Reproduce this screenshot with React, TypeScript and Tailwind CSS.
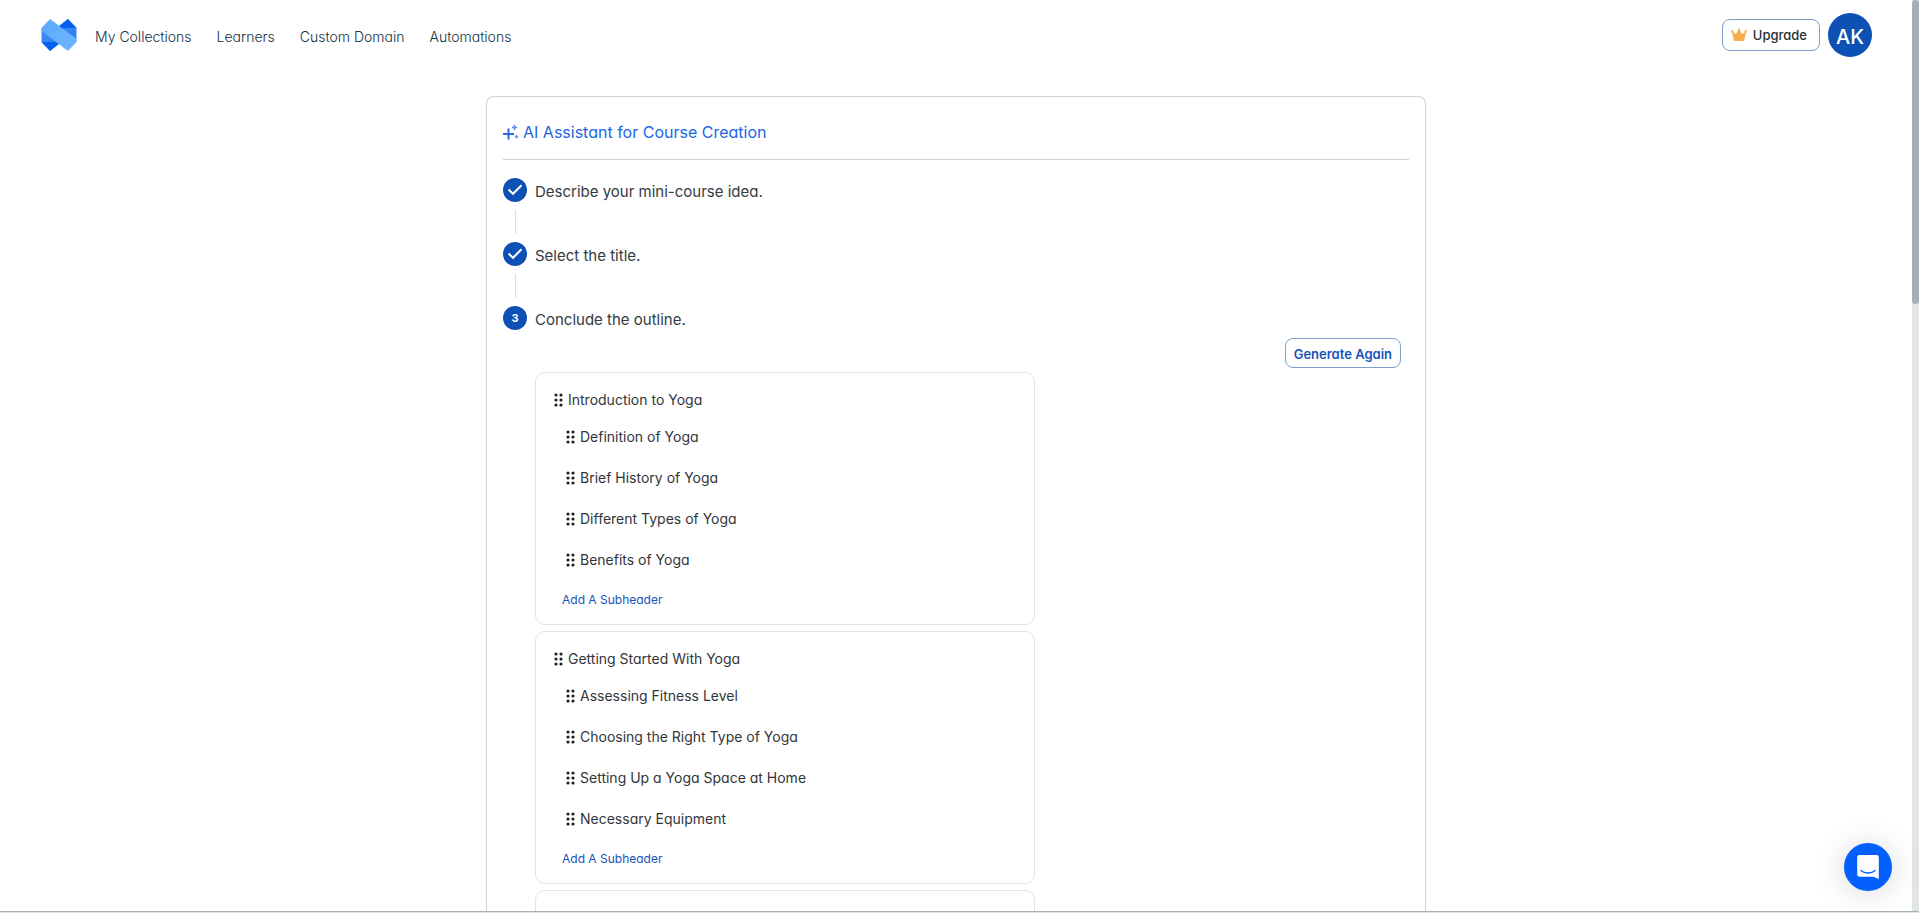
import type { ReactNode } from "react";

type Section = { title: string; items: string[] };

const navLinks = ["My Collections", "Learners", "Custom Domain", "Automations"];

const sections: Section[] = [
  {
    title: "Introduction to Yoga",
    items: ["Definition of Yoga", "Brief History of Yoga", "Different Types of Yoga", "Benefits of Yoga"],
  },
  {
    title: "Getting Started With Yoga",
    items: [
      "Assessing Fitness Level",
      "Choosing the Right Type of Yoga",
      "Setting Up a Yoga Space at Home",
      "Necessary Equipment",
    ],
  },
];

function Logo() {
  return (
    <svg viewBox="0 0 36 32" className="h-8 w-9" aria-hidden="true">
      <defs>
        <linearGradient id="ribbon" x1="0" y1="0" x2="1" y2="1">
          <stop offset="0" stopColor="#5ba6fb" />
          <stop offset="0.5" stopColor="#66b0ff" />
          <stop offset="1" stopColor="#6db4ff" />
        </linearGradient>
        <linearGradient id="fold" x1="0" y1="0" x2="1" y2="1">
          <stop offset="0" stopColor="#3a8df5" />
          <stop offset="1" stopColor="#2f80ee" />
        </linearGradient>
      </defs>
      <path d="M27 0 35.500 9V22L14 10Z" fill="url(#fold)" />
      <path d="M27 0 35.500 9H16Z" fill="#0560f2" />
      <path d="M.5 10V23L9 32 22 22Z" fill="url(#fold)" />
      <path d="M.5 23H20L9 32Z" fill="#0560f2" />
      <path d="M9 0 35.500 20V23L27 32 .5 12V9Z" fill="url(#ribbon)" />
    </svg>
  );
}

function Crown() {
  return (
    <svg viewBox="0 0 16 14" className="h-3.5 w-4" fill="#f6ae4f" aria-hidden="true">
      <path d="M1.600 3.600 4.800 6.200 7.400 1.900h1.200l2.600 4.300 3.200-2.600.6.5-1.600 6.900H2.600L1 4.100Z" />
      <path d="M2.500 10h11l-.4 3H2.900Z" />
      <circle cx="8" cy="1.800" r="1.200" />
      <circle cx="1.300" cy="3.500" r="1.200" />
      <circle cx="14.700" cy="3.500" r="1.200" />
    </svg>
  );
}

function Sparkle() {
  return (
    <svg viewBox="0 0 16 16" className="size-4" fill="none" stroke="#2b6be6" aria-hidden="true">
      <path d="M5.500 4.500v11M0 10h11" strokeWidth="2" />
      <path d="M11.500 1v5M9 3.500h5" strokeWidth="1.500" stroke="#5389ea" />
      <path d="M13.500 11v3.500M11.700 12.700h3.500" strokeWidth="1.500" stroke="#6c9bee" />
    </svg>
  );
}

function Check() {
  return (
    <svg viewBox="0 0 24 24" className="size-6" fill="none" stroke="#fff" strokeWidth="2" aria-hidden="true">
      <path d="m5.500 11.500 4.500 4.300 8.500-8.600" />
    </svg>
  );
}

function Handle() {
  return (
    <svg viewBox="0 0 10 14" className="h-3.5 w-2.5 shrink-0" fill="#1d2126" aria-hidden="true">
      {[2, 7, 12].map((y) => (
        <g key={y}>
          <circle cx="2" cy={y} r="1.600" />
          <circle cx="7" cy={y} r="1.600" />
        </g>
      ))}
    </svg>
  );
}

function Step({ marker, label, last }: { marker: ReactNode; label: string; last?: boolean }) {
  return (
    <li className="flex flex-col">
      <div className="flex h-6 items-center gap-2">
        <span className="flex size-6 items-center justify-center rounded-full bg-[#0d51b5] text-[11px] font-bold text-white">
          {marker}
        </span>
        <span className="pt-1 text-[15px] leading-5 text-[#343a40]">{label}</span>
      </div>
      {!last && <span className="my-2 ml-3 h-6 w-px bg-[#dedede]" />}
    </li>
  );
}

function OutlineCard({ section }: { section: Section }) {
  return (
    <section className="h-[253px] rounded-[10px] border border-[#e1e3e5] px-[18px] pt-[17px]">
      <h3 className="flex h-5 items-center gap-1 text-sm text-[#32363b]">
        <Handle />
        {section.title}
      </h3>
      <ul className="mt-[17px] ml-3 flex flex-col gap-[21px]">
        {section.items.map((item) => (
          <li key={item} className="flex h-5 items-center gap-1 text-sm text-[#32363b]">
            <Handle />
            {item}
          </li>
        ))}
      </ul>
      <button type="button" className="mt-5 ml-2 block text-xs leading-5 text-[#1654b8]">
        Add A Subheader
      </button>
    </section>
  );
}

export default function App() {
  return (
    <div className="flex h-screen flex-col bg-white font-['Inter','Noto_Sans',sans-serif] [font-feature-settings:'cv11']">
      <div className="flex min-h-0 flex-1">
        <div className="flex min-w-0 flex-1 flex-col overflow-y-auto [scrollbar-width:none]">
          <header className="flex h-[70px] shrink-0 items-center justify-between pr-10 pl-[41px]">
            <nav className="flex items-center" aria-label="Main">
              <a href="#home" aria-label="Home" className="mr-[18px]">
                <Logo />
              </a>
              <ul className="flex gap-[25px] pt-1 text-sm leading-5 font-light text-[#123246]">
                {navLinks.map((link) => (
                  <li key={link}>
                    <a href="#nav">{link}</a>
                  </li>
                ))}
              </ul>
            </nav>
            <div className="flex items-center gap-2">
              <button
                type="button"
                className="flex h-8 items-center gap-1.5 rounded-lg border border-[#7f9fcb] px-2 pr-3 text-[13px] font-medium text-[#2a2f36]"
              >
                <Crown />
                <span className="pt-0.5">Upgrade</span>
              </button>
              <button
                type="button"
                className="flex size-11 items-center justify-center rounded-full bg-[#0d51b5] pt-1 text-xl font-medium text-white"
              >
                AK
              </button>
            </div>
          </header>

          <main className="mx-auto mt-[26px] w-full max-w-[940px] rounded-t-lg border border-b-0 border-[#cfd1d3] px-4 pb-6">
            <h1 className="flex h-[63px] items-center gap-1 border-b border-[#cfd1d3] pt-2 text-base text-[#1b66e4]">
              <Sparkle />
              AI Assistant for Course Creation
            </h1>
            <ol className="mt-[18px]">
              <Step marker={<Check />} label="Describe your mini-course idea." />
              <Step marker={<Check />} label="Select the title." />
              <Step marker="3" label="Conclude the outline." last />
            </ol>
            <div className="mt-2 flex justify-end pr-2">
              <button
                type="button"
                className="h-[30px] rounded-lg border border-[#7f9fcb] px-2 pt-1 text-[13px] font-semibold text-[#1654b8]"
              >
                Generate Again
              </button>
            </div>
            <div className="mt-1 ml-8 flex max-w-[500px] flex-col gap-1.5">
              {sections.map((section) => (
                <OutlineCard key={section.title} section={section} />
              ))}
              <section className="h-24 rounded-[10px] border border-[#e1e3e5]" />
            </div>
          </main>
        </div>
        <div className="w-[7px] shrink-0 bg-[#e1e5e8]">
          <div className="h-1/3 rounded-full bg-[#a3b0b9]" />
        </div>
      </div>
      <div className="h-0.5 shrink-0 border-t border-[#a9b0b4] bg-[#dfe5e6]" />
      <button
        type="button"
        aria-label="Open chat"
        className="fixed right-[27px] bottom-[22px] flex size-12 items-center justify-center rounded-full bg-[#0360ff] shadow-[0_2px_32px_rgba(0,0,0,0.16)]"
      >
        <svg viewBox="0 0 22 24" className="h-6 w-[22px]" aria-hidden="true">
          <path d="M2.500 0h17A2.300 2.300 0 0 1 21.800 2.300V24L16.500 21.800H2.500A2.300 2.300 0 0 1 .2 19.500V2.300A2.300 2.300 0 0 1 2.500 0Z" fill="#fff" />
          <path d="M3.800 15.500c4 3.300 10.400 3.300 14.400 0" fill="none" stroke="#0360ff" strokeWidth="1.300" strokeLinecap="round" />
        </svg>
      </button>
    </div>
  );
}
